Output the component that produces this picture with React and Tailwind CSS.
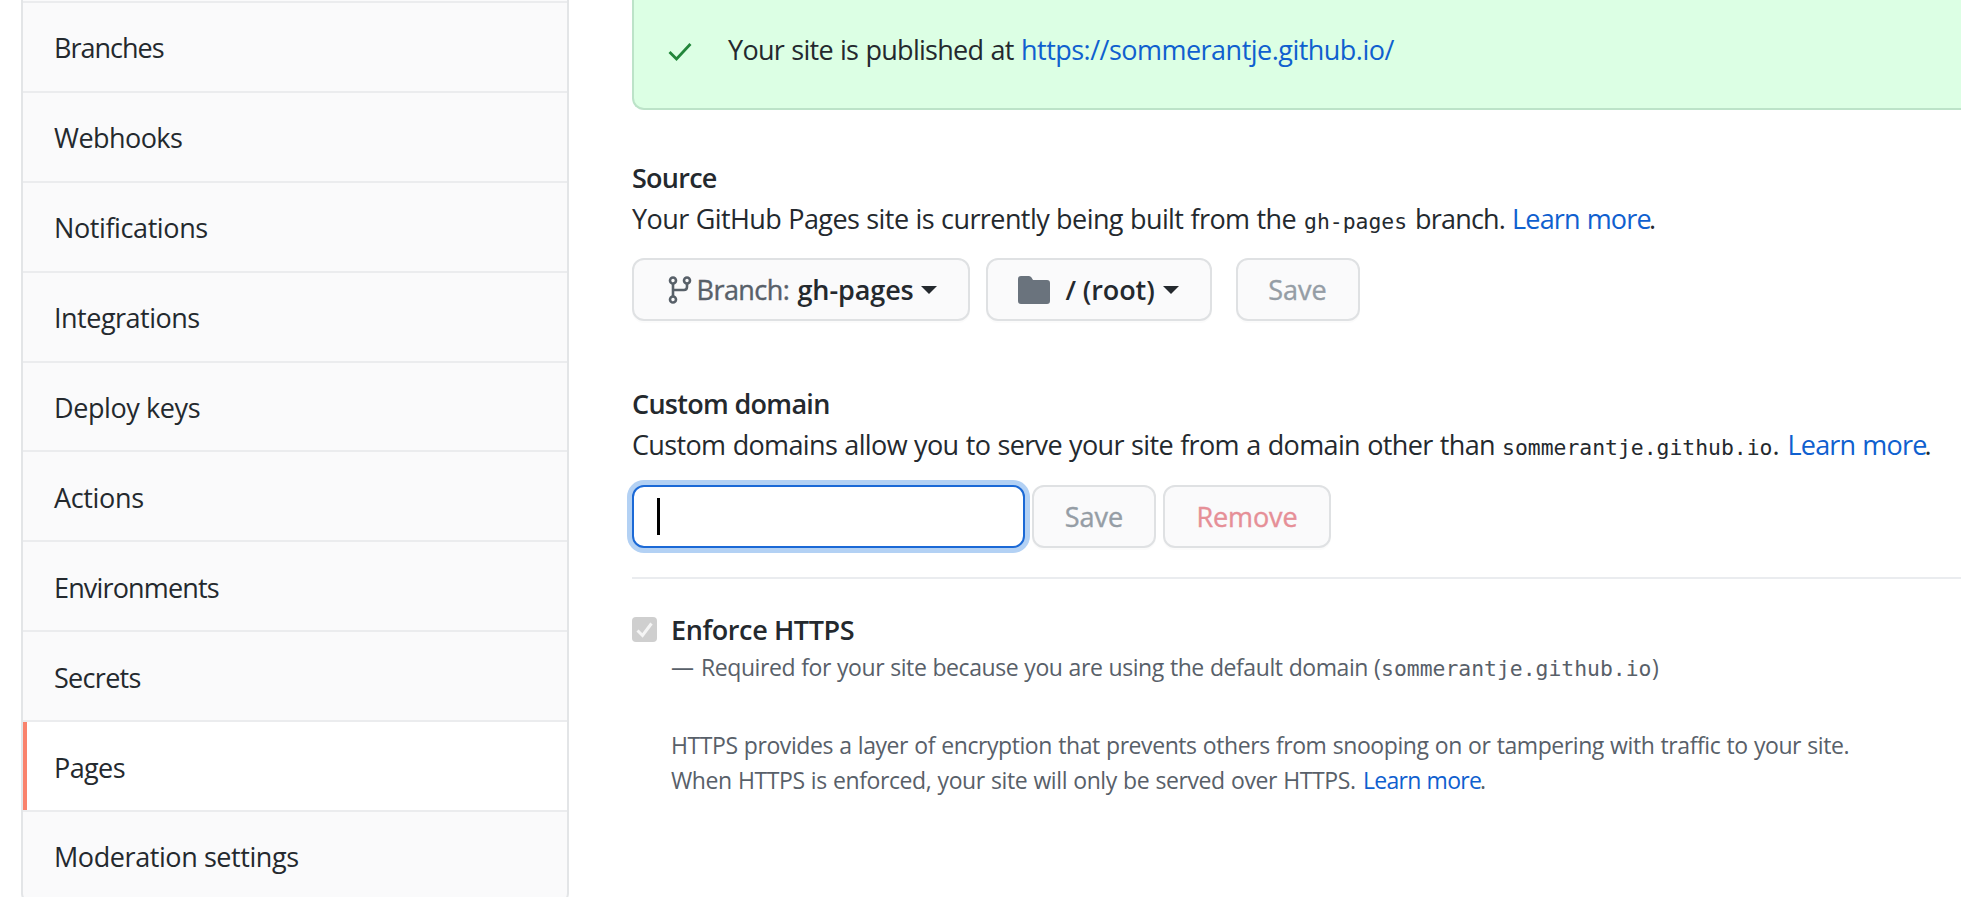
const menu = [
  { label: 'Branches', tracking: 'tracking-[-1px]' },
  { label: 'Webhooks', tracking: 'tracking-[-0.55px]' },
  { label: 'Notifications', tracking: 'tracking-[-0.4px]' },
  { label: 'Integrations', tracking: 'tracking-[-0.5px]' },
  { label: 'Deploy keys', tracking: 'tracking-[-0.4px]' },
  { label: 'Actions', tracking: 'tracking-[-0.35px]' },
  { label: 'Environments', tracking: 'tracking-[-0.85px]' },
  { label: 'Secrets', tracking: 'tracking-[-0.7px]' },
  { label: 'Pages', tracking: 'tracking-[-0.6px]', active: true },
  { label: 'Moderation settings', tracking: 'tracking-[-0.42px]' },
]

function Sidebar() {
  return (
    <nav className="ml-[21px] h-[905px] w-[548px] shrink-0 rounded-b-xl border-x-2 border-b-2 border-[#e3e5e7] bg-[#fafafb]">
      <div className="h-[3px] border-b-2 border-[#ebecee]" />
      {menu.map(({ label, tracking, active }) => (
        <a
          key={label}
          className={`flex h-[89.9px] items-center border-b-2 border-[#ebecee] ${active ? 'bg-white' : ''}`}
        >
          <span className={`h-full w-1 ${active ? 'bg-[#f9826c]' : ''}`} />
          <span className={`ml-[27px] whitespace-nowrap pt-[3px] leading-[40px] ${tracking}`}>{label}</span>
        </a>
      ))}
    </nav>
  )
}

function Link({ children, className = '' }) {
  return <a className={`inline-block whitespace-nowrap text-[#0f60cf] ${className}`}>{children}</a>
}

function Mono({ children, className = '' }) {
  return (
    <code className={`inline-block whitespace-nowrap font-['DejaVu_Sans_Mono',monospace] text-[21.4px] tracking-normal ${className}`}>
      {children}
    </code>
  )
}

function Button({ children, className = '' }) {
  return (
    <button
      className={`flex h-[63px] shrink-0 items-center whitespace-nowrap rounded-xl border-2 border-[#dfe1e3] bg-[#fafafb] leading-[40px] shadow-[0_2px_0_rgba(27,31,35,0.02)] [-webkit-text-stroke:0.4px] ${className}`}
    >
      {children}
    </button>
  )
}

function Caret({ className = '' }) {
  return (
    <svg viewBox="0 0 16 8" className={`mt-[2px] h-2 w-4 shrink-0 fill-[#24292e] ${className}`}>
      <path d="M0 0H16L8 8Z" />
    </svg>
  )
}

export default function App() {
  return (
    <div className="flex h-[897px] overflow-hidden bg-white font-['Open_Sans',sans-serif] text-[27px] text-[#24292e]">
      <Sidebar />
      <main className="ml-[63px] flex min-w-0 flex-1 flex-col">
        <section className="flex h-[109.5px] shrink-0 rounded-bl-xl border-b-2 border-l-2 border-[#bce3c8] bg-[#dcffe4] pt-[31px]">
          <svg viewBox="0 0 24 20" className="ml-[34px] mt-[10.5px] h-5 w-6" fill="none" stroke="#22863a" strokeWidth="2.8" strokeLinecap="square">
            <path d="M2.500 11L8.500 17L21.500 3" />
          </svg>
          <p className="ml-[36px] flex leading-[37px]">
            <span className="inline-block w-[293px] whitespace-nowrap tracking-[-0.72px] [word-spacing:0.9px]">Your site is published at</span>
            <Link className="tracking-[-0.52px]">https://sommerantje.github.io/</Link>
          </p>
        </section>

        <section className="mt-[47.5px] shrink-0">
          <h4 className="font-semibold leading-[41px] tracking-[-0.75px]">Source</h4>
          <p className="flex h-[41px] items-baseline leading-[41px] tracking-[-0.58px] [word-spacing:0.6px]">
            <span className="w-[672px] whitespace-nowrap">Your GitHub Pages site is currently being built from the</span>
            <Mono className="w-[111px]">gh-pages</Mono>
            <span className="w-[97px] whitespace-nowrap tracking-[-0.8px]">branch.</span>
            <Link className="w-[137px] tracking-[-0.8px]">Learn more</Link>
            <span>.</span>
          </p>
          <div className="mt-[18.5px] flex">
            <Button className="w-[338px]">
              <svg viewBox="0 0 24 28" className="ml-[34px] mt-[2px] h-7 w-6 shrink-0" fill="none" stroke="#586069" strokeWidth="2.6">
                <circle cx="5" cy="4.5" r="3" />
                <circle cx="19" cy="4.5" r="3" />
                <circle cx="5" cy="23.5" r="3" />
                <path d="M5 7.5V20.500M19 7.500V11Q19 14 16 14H5" />
              </svg>
              <span className="ml-[4.500px] w-[101px] pt-[2px] text-left tracking-[-0.55px] text-[#586069]">Branch:</span>
              <span className="w-[123px] pt-[2px] text-left font-semibold tracking-[-0.1px] [-webkit-text-stroke:0]">gh-pages</span>
              <Caret />
            </Button>
            <Button className="ml-4 w-[226px]">
              <svg viewBox="0 0 32 28" className="ml-[30px] mt-[2px] h-7 w-8 shrink-0 fill-[#6a737d]">
                <path d="M3 0H11Q12.500 0 13.500 1.500L15 4H29Q32 4 32 7V25Q32 28 29 28H3Q0 28 0 25V3Q0 0 3 0Z" />
              </svg>
              <span className="ml-[15.5px] w-[97px] pt-[2px] text-left font-semibold tracking-[-0.1px] [-webkit-text-stroke:0]">/ (root)</span>
              <Caret />
            </Button>
            <Button className="ml-[23.5px] w-[124px] justify-center pt-[2px] text-[#959da5]">Save</Button>
          </div>
        </section>

        <section className="mt-[62.5px] shrink-0">
          <h4 className="font-semibold leading-[41px] tracking-[-0.7px]">Custom domain</h4>
          <p className="flex h-[41px] items-baseline leading-[41px] tracking-[-0.64px] [word-spacing:0.8px]">
            <span className="w-[870px] whitespace-nowrap">Custom domains allow you to serve your site from a domain other than</span>
            <Mono className="w-[270.5px]">sommerantje.github.io</Mono>
            <span className="w-[15px]">.</span>
            <Link className="w-[137px] tracking-[-0.8px]">Learn more</Link>
            <span>.</span>
          </p>
          <div className="mt-[19.5px] flex">
            <div className="flex h-[63px] w-[393px] items-center rounded-xl border-2 border-[#1b69d6] bg-white shadow-[0_0_0_5px_#b3d1f4]">
              <span className="ml-[23px] h-[37px] w-[2.5px] bg-black" />
            </div>
            <Button className="ml-[7px] w-[124px] justify-center pt-[2px] text-[#959da5]">Save</Button>
            <Button className="ml-[7px] w-[168px] justify-center pt-[2px] tracking-[-0.15px] text-[#e68f97]">Remove</Button>
          </div>
        </section>

        <div className="mt-[29.5px] h-[2px] shrink-0 bg-[#eaecef]" />

        <section className="mt-[30px] flex shrink-0">
          <div className="mt-[8px] flex h-[25px] w-[25px] shrink-0 items-center justify-center rounded-[4px] bg-[#cfcfcf]">
            <svg viewBox="0 0 20 18" className="h-[18px] w-5" fill="none" stroke="#f5f5f5" strokeWidth="3">
              <path d="M2.500 9.500L7.500 14.500L16.500 2.500" />
            </svg>
          </div>
          <div className="ml-[14px] text-[23px] leading-[35px] text-[#586069]">
            <h4 className="text-[27px] font-semibold leading-[41px] tracking-[-0.4px] text-[#24292e]">Enforce HTTPS</h4>
            <p className="flex h-[35px] items-baseline tracking-[-0.42px] [word-spacing:0.5px]">
              <span className="w-[30px]">—</span>
              <span className="w-[680px] whitespace-nowrap">Required for your site because you are using the default domain (</span>
              <Mono className="w-[271px]">sommerantje.github.io</Mono>
              <span>)</span>
            </p>
            <p className="mt-[42.5px] whitespace-nowrap tracking-[-0.43px] [word-spacing:0.7px]">
              HTTPS provides a layer of encryption that prevents others from snooping on or tampering with traffic to your site.
            </p>
            <p className="flex tracking-[-0.4px] [word-spacing:0.6px]">
              <span className="w-[692px] whitespace-nowrap">When HTTPS is enforced, your site will only be served over HTTPS.</span>
              <Link className="w-[117px] tracking-[-0.7px]">Learn more</Link>
              <span>.</span>
            </p>
          </div>
        </section>
      </main>
    </div>
  )
}
